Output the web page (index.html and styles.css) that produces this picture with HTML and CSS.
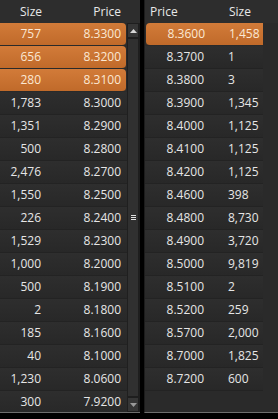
FILE: index.html
```html
<!DOCTYPE html>
<html>
<head>
<meta charset="utf-8">
<link rel="stylesheet" href="styles.css">
</head>
<body>
<div class="book">
  <div class="panel bids">
    <div class="head">
      <span class="h-size">Size</span>
      <span class="h-price">Price</span>
    </div>
    <div class="body">
      <div class="rows">
        <div class="row hl"><span>757</span><span>8.3300</span></div>
        <div class="row hl"><span>656</span><span>8.3200</span></div>
        <div class="row hl"><span>280</span><span>8.3100</span></div>
        <div class="row"><span>1,783</span><span>8.3000</span></div>
        <div class="row"><span>1,351</span><span>8.2900</span></div>
        <div class="row"><span>500</span><span>8.2800</span></div>
        <div class="row"><span>2,476</span><span>8.2700</span></div>
        <div class="row"><span>1,550</span><span>8.2500</span></div>
        <div class="row"><span>226</span><span>8.2400</span></div>
        <div class="row"><span>1,529</span><span>8.2300</span></div>
        <div class="row"><span>1,000</span><span>8.2000</span></div>
        <div class="row"><span>500</span><span>8.1900</span></div>
        <div class="row"><span>2</span><span>8.1800</span></div>
        <div class="row"><span>185</span><span>8.1600</span></div>
        <div class="row"><span>40</span><span>8.1000</span></div>
        <div class="row"><span>1,230</span><span>8.0600</span></div>
        <div class="row"><span>300</span><span>7.9200</span></div>
      </div>
      <div class="scrollbar">
        <div class="sb-btn"><svg width="7" height="4" viewBox="0 0 7 4"><path d="M0 4 L3.5 0 L7 4 Z" fill="#d8d8d8"/></svg></div>
        <div class="sb-track">
          <div class="thumb"><svg width="5" height="5" viewBox="0 0 5 5"><rect y="0" width="5" height="1" fill="#e0e0e0"/><rect y="2" width="5" height="1" fill="#e0e0e0"/><rect y="4" width="5" height="1" fill="#e0e0e0"/></svg></div>
        </div>
        <div class="sb-btn"><svg width="7" height="4" viewBox="0 0 7 4"><path d="M0 0 L7 0 L3.5 4 Z" fill="#9a9a9a"/></svg></div>
      </div>
    </div>
  </div>
  <div class="panel asks">
    <div class="head">
      <span class="h-price">Price</span>
      <span class="h-size">Size</span>
    </div>
    <div class="body">
      <div class="rows">
        <div class="row hl"><span>8.3600</span><span>1,458</span></div>
        <div class="row"><span>8.3700</span><span>1</span></div>
        <div class="row"><span>8.3800</span><span>3</span></div>
        <div class="row"><span>8.3900</span><span>1,345</span></div>
        <div class="row"><span>8.4000</span><span>1,125</span></div>
        <div class="row"><span>8.4100</span><span>1,125</span></div>
        <div class="row"><span>8.4200</span><span>1,125</span></div>
        <div class="row"><span>8.4600</span><span>398</span></div>
        <div class="row"><span>8.4800</span><span>8,730</span></div>
        <div class="row"><span>8.4900</span><span>3,720</span></div>
        <div class="row"><span>8.5000</span><span>9,819</span></div>
        <div class="row"><span>8.5100</span><span>2</span></div>
        <div class="row"><span>8.5200</span><span>259</span></div>
        <div class="row"><span>8.5700</span><span>2,000</span></div>
        <div class="row"><span>8.7000</span><span>1,825</span></div>
        <div class="row"><span>8.7200</span><span>600</span></div>
      </div>
      <div class="spacer"></div>
    </div>
  </div>
</div>
</body>
</html>
```

FILE: styles.css
```css
* { box-sizing: border-box; }
html, body {
  margin: 0;
  padding: 0;
  background: #000;
}
body {
  width: 278px;
  height: 419px;
  overflow: hidden;
  font-family: "Open Sans", "Noto Sans", sans-serif;
  font-size: 12px;
  color: #e6e6e6;
}
.book {
  display: flex;
  gap: 4px;
  height: 413px;
}
.panel {
  display: flex;
  flex-direction: column;
  background: #2a2a2a;
  border-bottom: 1px solid #6e6e6e;
  overflow: hidden;
}
.bids { width: 140px; }
.asks { flex: 1; border-left: 1px solid #1c1c1c; }

.head {
  height: 23px;
  flex: none;
  display: grid;
  align-items: center;
  background: #2d2d2d;
  color: #e8e8e8;
  line-height: 23px;
}
.bids .head {
  grid-template-columns: 42px 79px;
  text-align: right;
}
.asks .head {
  grid-template-columns: 79px 1fr;
  padding-left: 5px;
}

.body {
  flex: 1;
  display: flex;
  min-height: 0;
}
.rows {
  display: flex;
  flex-direction: column;
}
.bids .rows { width: 127px; }
.asks .rows { width: 118px; }
.spacer { flex: 1; }

.row {
  height: 23px;
  flex: none;
  display: grid;
  align-items: center;
  line-height: 22px;
  background: linear-gradient(#2e2e2e, #282828);
  border-bottom: 1px solid #232323;
  white-space: nowrap;
}
.bids .row {
  grid-template-columns: 41px 80px;
  text-align: right;
}
.asks .row {
  grid-template-columns: 59px 1fr;
}
.asks .row span:first-child { text-align: right; }
.asks .row span:last-child { padding-left: 24px; }

.row.hl {
  background: linear-gradient(#d27b39, #c06a2a);
  color: #fbe8d4;
  border-bottom: 1px solid #2a2a2a;
}
.bids .row.hl {
  border-radius: 0 4px 4px 0;
  margin-right: 1px;
}
.asks .row.hl {
  border-radius: 4px 0 0 4px;
  margin-left: 1px;
}

.scrollbar {
  width: 13px;
  display: flex;
  flex-direction: column;
  background: #1e1e1e;
  border-left: 1px solid #1f1f1f;
}
.sb-btn {
  height: 13px;
  flex: none;
  display: flex;
  align-items: center;
  justify-content: center;
  background: #363636;
  margin: 1px 2px 1px 0;
}
.sb-track {
  flex: 1;
  display: flex;
  padding: 1px 2px 1px 0;
}
.thumb {
  flex: 1;
  display: flex;
  align-items: center;
  justify-content: center;
  background: #303030;
}
```
